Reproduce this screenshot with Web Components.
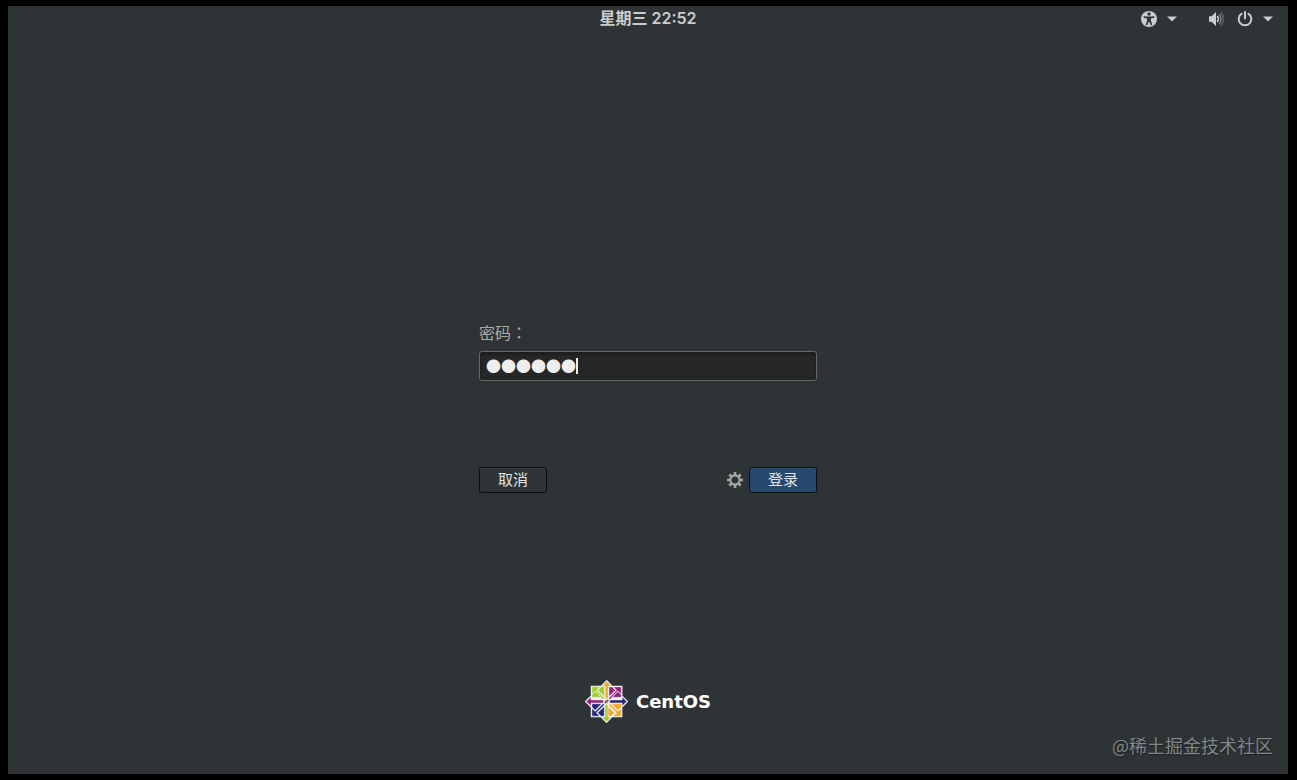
<!DOCTYPE html>
<html lang="zh-CN">
<head>
    <meta charset="UTF-8"/>
    <meta name="viewport" content="width=device-width, initial-scale=1">
    <title>CentOS</title>
    <style>
        body {
            margin: 0;
            background: #000;
            font-family: "Noto Sans CJK SC", sans-serif;
        }
    </style>
</head>
<body>

<login-screen>
    <top-bar slot="top">星期三 22:52</top-bar>
    <login-form label="密码：" value="●●●●●●">
        <action-button slot="cancel">取消</action-button>
        <action-button slot="submit" primary>登录</action-button>
    </login-form>
    <distro-logo slot="logo">CentOS</distro-logo>
    <span slot="watermark">@稀土掘金技术社区</span>
</login-screen>

<script>
    function define(tagName, html) {
        window.customElements.define(tagName, class extends HTMLElement {
            constructor() {
                super();
                this.attachShadow({ mode: 'open' }).innerHTML = html;
            }

            connectedCallback() {
                const label = this.shadowRoot.querySelector('label');
                const input = this.shadowRoot.querySelector('input');
                if (label) {
                    label.textContent = this.getAttribute('label');
                    input.value = this.getAttribute('value');
                }
            }
        });
    }

    define('login-screen', `
        <style>
            :host {
                display: block;
                box-sizing: border-box;
                min-height: 100vh;
                padding: 6px 9px 6px 8px;
            }
            .screen {
                position: relative;
                box-sizing: border-box;
                min-height: calc(100vh - 12px);
                display: flex;
                flex-direction: column;
                background: #2e3436;
            }
            main {
                flex: 1;
                display: grid;
                grid-template-rows: 1fr auto 1fr;
                justify-items: center;
            }
            .form { grid-row: 2; padding-top: 8px; }
            .logo { grid-row: 3; align-self: end; padding-bottom: 51px; }
            .watermark {
                position: absolute;
                right: 15px;
                bottom: 17px;
                font-size: 18px;
                line-height: 24px;
                color: #81868a;
                text-shadow: 1px 1px 1px #1b1f20;
            }
        </style>
        <div class="screen">
            <slot name="top"></slot>
            <main>
                <div class="form"><slot></slot></div>
                <div class="logo"><slot name="logo"></slot></div>
            </main>
            <div class="watermark"><slot name="watermark"></slot></div>
        </div>
    `);

    define('top-bar', `
        <style>
            :host {
                display: grid;
                grid-template-columns: 1fr auto 1fr;
                align-items: center;
                height: 26px;
                padding: 0 14px;
                color: #ccc;
            }
            .clock {
                grid-column: 2;
                font: 600 16px/24px Inter, "Noto Sans CJK SC", sans-serif;
                padding-bottom: 2px;
            }
            .status {
                display: flex;
                justify-content: flex-end;
                gap: 28px;
            }
            button {
                display: flex;
                align-items: center;
                gap: 8px;
                padding: 0;
                border: 0;
                background: none;
                color: inherit;
            }
            svg { display: block; fill: currentColor; }
            .line { fill: none; stroke: currentColor; stroke-width: 2; stroke-linecap: round; }
            .wave { stroke-width: 1.5; }
        </style>
        <div class="clock"><slot></slot></div>
        <div class="status">
            <button type="button" aria-label="辅助功能">
                <svg width="18" height="18" viewBox="0 0 18 18">
                    <circle cx="9" cy="9" r="8"/>
                    <g fill="#2e3436">
                        <circle cx="9" cy="4" r="1.7"/>
                        <path d="M3.7 6.2l3.6.4h3.4l3.6-.4v1.5l-3.4.9v2.2l1.4 4-1.4.6L9.4 12h-.8l-1.5 3.4-1.4-.6 1.4-4V8.6l-3.4-.9z"/>
                    </g>
                </svg>
                <svg width="12" height="6" viewBox="0 0 12 6"><path d="M1 .5h10l-5 5z"/></svg>
            </button>
            <button type="button" aria-label="系统菜单">
                <svg width="22" height="18" viewBox="0 0 22 18">
                    <path d="M3 6.2h2.500L10 2v14l-4.500-4.200H3z"/>
                    <path class="line wave" d="M11.500 6.500q1.800 2.500 0 5"/>
                    <path class="line wave" opacity=".5" d="M13.500 4.500q3 4.500 0 9"/>
                    <path class="line wave" opacity=".3" d="M15.500 3q4 6 0 12"/>
                </svg>
                <svg width="18" height="18" viewBox="0 0 18 18">
                    <path class="line" d="M9 2v6.500M5.700 3.700a6.300 6.300 0 1 0 6.600 0"/>
                </svg>
                <svg width="12" height="6" viewBox="0 0 12 6"><path d="M1 .5h10l-5 5z"/></svg>
            </button>
        </div>
    `);

    define('login-form', `
        <style>
            :host { display: block; width: 338px; max-width: 100vw; }
            form { margin: 0; }
            label {
                display: block;
                margin-bottom: 9px;
                font: 16px/20px "Noto Sans CJK TC", sans-serif;
                color: #a9acaa;
            }
            .field { position: relative; font-size: 15px; }
            input {
                display: block;
                box-sizing: border-box;
                width: 100%;
                height: 30px;
                padding: 0 6px;
                border: 1px solid #666865;
                border-radius: 3px;
                outline: 0;
                background: #262626;
                box-shadow: inset 0 2px 3px #1c1c1c;
                font: 15px "Noto Sans CJK SC", sans-serif;
                color: #eeeeec;
                caret-color: transparent;
            }
            .caret {
                position: absolute;
                top: 7px;
                left: calc(7px + 6em);
                width: 2px;
                height: 16px;
                background: #eeeeec;
            }
            .actions {
                display: flex;
                align-items: center;
                gap: 5px;
                margin-top: 86px;
            }
            .session {
                margin-left: auto;
                padding: 0;
                border: 0;
                background: none;
                color: #a3a6a1;
            }
            svg { display: block; }
        </style>
        <form>
            <label for="password" lang="zh-TW"></label>
            <div class="field">
                <input id="password" type="text" autocomplete="off">
                <span class="caret"></span>
            </div>
            <div class="actions">
                <slot name="cancel"></slot>
                <button class="session" type="button" aria-label="会话">
                    <svg width="18" height="18" viewBox="-9 -9 18 18" fill="none" stroke="currentColor">
                        <circle r="4.7" stroke-width="2.2"/>
                        <g stroke-width="2.6">
                            <path d="M0-8v3M0 8v-3M-8 0h3M8 0h-3"/>
                            <path d="M0-8v3M0 8v-3M-8 0h3M8 0h-3" transform="rotate(45)"/>
                        </g>
                    </svg>
                </button>
                <slot name="submit"></slot>
            </div>
        </form>
    `);

    define('action-button', `
        <style>
            :host { display: block; }
            button {
                display: block;
                box-sizing: border-box;
                min-width: 68px;
                height: 26px;
                padding: 0 16px 2px;
                border: 1px solid #0d1011;
                border-radius: 3px;
                background: #2e3436;
                box-shadow: inset 0 1px #3a4143;
                font: 15px/22px "Noto Sans CJK SC", sans-serif;
                color: #e2e4e2;
            }
            :host([primary]) button {
                background: #264a6f;
                box-shadow: inset 0 1px #2f557b;
            }
        </style>
        <button type="button"><slot></slot></button>
    `);

    define('distro-logo', `
        <style>
            :host {
                display: flex;
                align-items: center;
                gap: 8px;
                font: bold 18px/24px "DejaVu Sans", sans-serif;
                color: #fff;
            }
            svg { display: block; }
        </style>
        <svg width="43" height="43" viewBox="0 0 24 24" aria-hidden="true">
            <path fill="#9ccd2a" d="M3.5 3.5H12V12H3.5z"/>
            <path fill="#932279" d="M12 3.5h8.500V12H12z"/>
            <path fill="#262577" d="M3.5 12H12v8.500H3.500z"/>
            <path fill="#efa724" d="M12 12h8.500v8.500H12z"/>
            <path fill="#efa724" d="M12.076.5L9 3.500h2.200V10l.8.8.9-.8V3.500h2z"/>
            <path fill="#262577" d="M23.500 12l-3-3v2.200H14l-.8.8.8.8h6.500V15z"/>
            <path fill="#9ccd2a" d="M12 23.500l3-3h-2.200V14l-.8-.8-.8.8v6.500H9z"/>
            <path fill="#932279" d="M.5 12l3-3v2.200H10l.8.8-.8.8H3.500V15z"/>
            <path fill="#f2f2f2" stroke="#f2f2f2" stroke-width=".25" d="M12.076.066L8.883 3.280H3.348v5.434L0 12.010l3.349 3.298v5.390h5.374l3.285 3.236 3.285-3.236h5.430v-5.374L24 12.026l-3.232-3.252V3.321H15.310zm0 .749l2.490 2.506h-1.690v6.441l-.8.805-.81-.815V3.280H9.627zm-8.200 2.991h4.483L6.485 5.692l4.253 4.279v.654H9.940L5.674 6.423l-1.798 1.770zm5.227 0h1.635v5.415l-3.509-3.530zm4.302.043h1.687l1.830 1.842-3.517 3.539zm2.431 0h4.404v4.394l-1.830-1.842-4.241 4.282h-.764v-.69l4.261-4.283zm2.574 2.300l1.830 1.843v1.676h-5.327zm-12.735.013l3.515 3.462H3.876v-1.690zM3.348 9.454v1.697h6.377l.871.858-.782.770H3.350v1.786L.753 12.010zm17.420.068l2.488 2.503-2.533 2.550v-1.796h-6.410l-.75-.754.825-.83h6.380zm-9.502.978l.81.815.186-.188.614-.618v.686h.768l-.825.830.750.754h-.719v.808l-.842-.83-.741.730v-.707h-.7l.781-.78-.188-.186-.682-.672h.788zm-7.390 2.807h5.402l-3.603 3.550-1.798-1.772zm6.154 0h.708v.7l-4.404 4.338 1.852 1.824h-4.310v-4.342l1.798 1.770zm3.348 0h.715l4.317 4.343.186-.187 1.599-1.610v4.316h-4.366l1.853-1.825-.188-.185-4.116-4.054zm1.460 0h5.357v1.798l-1.785 1.796zm-2.830.191l.842.829v6.370h1.691l-2.532 2.495-2.533-2.495h1.790V14.230zm-1.270 1.251v5.420H8.939l-1.852-1.823zm2.097.068l3.552 3.499-1.853 1.825h-1.700z"/>
        </svg>
        <span><slot></slot></span>
    `);
</script>
</body>
</html>
